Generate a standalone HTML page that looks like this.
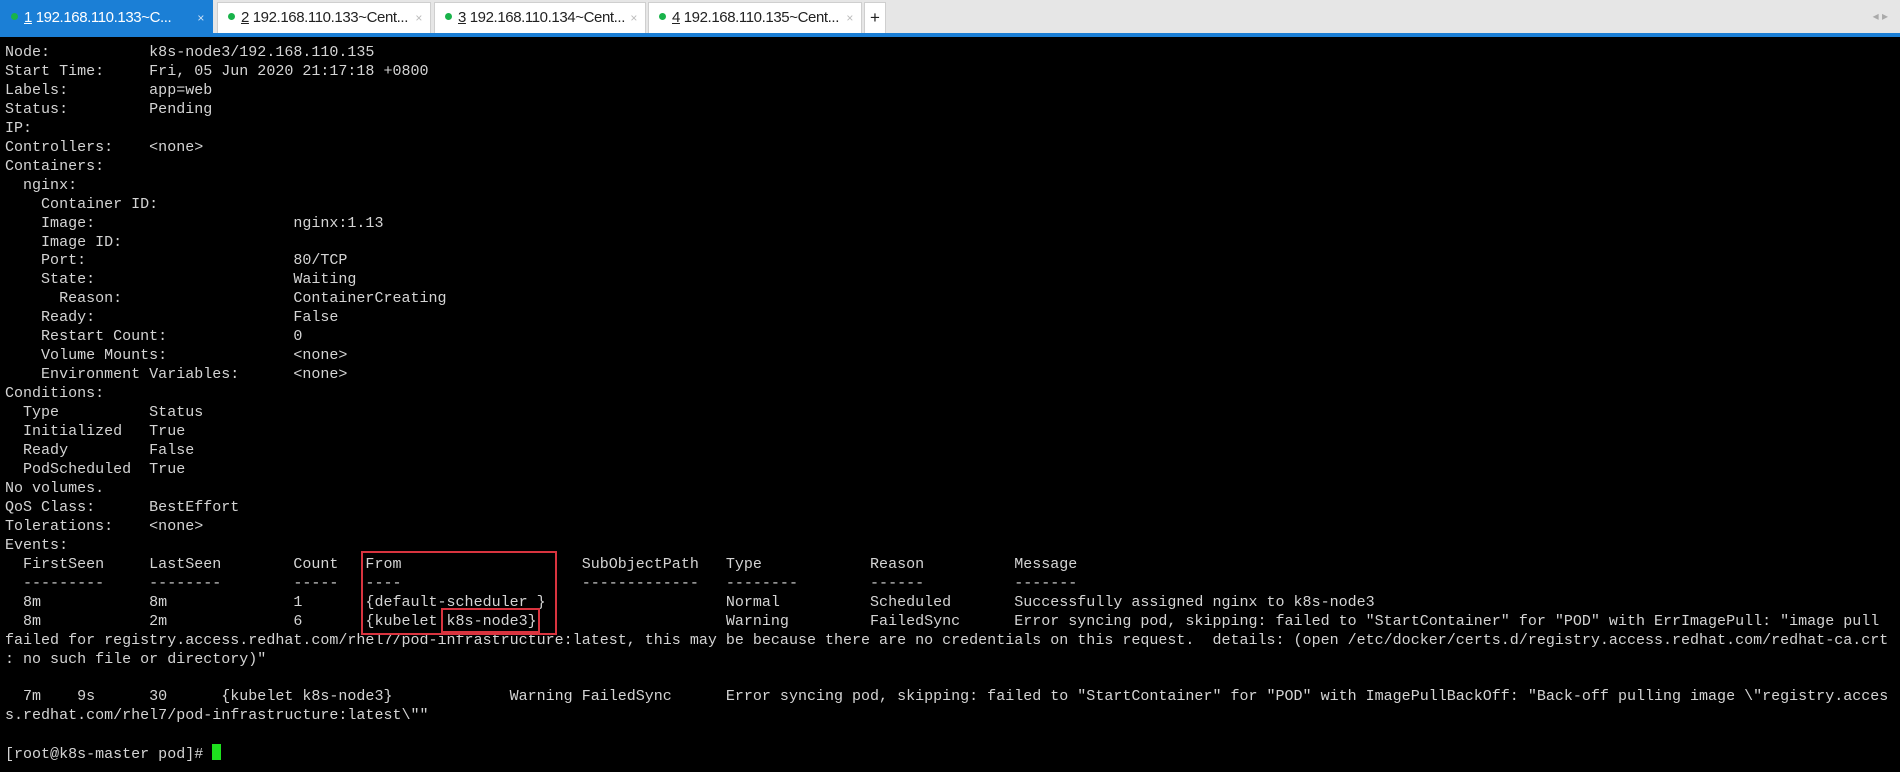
<!DOCTYPE html>
<html><head><meta charset="utf-8"><style>
html,body{margin:0;padding:0;width:1900px;height:772px;overflow:hidden;background:#000;}
#bar{position:absolute;left:0;top:0;width:1900px;height:33px;background:#e6e6e6;}
.tab{position:absolute;top:2px;height:31px;background:#fff;border:1px solid #cfcfcf;border-bottom:none;box-sizing:border-box;font-family:"Liberation Sans",sans-serif;font-size:15px;color:#222;line-height:30px;padding-left:10px;white-space:nowrap;overflow:hidden;letter-spacing:-0.4px}
.tab .d{display:inline-block;width:7px;height:7px;border-radius:50%;background:#19b34a;margin-right:6px;vertical-align:2px}
.tab .x{position:absolute;right:8px;top:0;color:#bbb;font-size:12px}
.tab.a{background:#1b7fd6;color:#fff;border-color:#1b7fd6;top:0;height:33px;line-height:34px}
.tab.a .x{color:#cfe3f7}
#line{position:absolute;left:0;top:33px;width:1900px;height:4px;background:#1b7fd6}
pre{position:absolute;left:5px;top:43px;margin:0;font-family:"Liberation Mono",monospace;font-size:15.03px;line-height:18.95px;color:#d4d4d4;white-space:pre}
.box{position:absolute;border:2px solid #d9343f;box-sizing:border-box}
.cur{display:inline-block;width:9px;height:16px;background:#1ee01e;vertical-align:-2px}
</style></head><body>
<div id="bar">
<div class="tab a" style="left:0;width:213px"><span class="d"></span><u>1</u> 192.168.110.133~C...<span class="x">×</span></div>
<div class="tab" style="left:217px;width:214px"><span class="d"></span><u>2</u> 192.168.110.133~Cent...<span class="x">×</span></div>
<div class="tab" style="left:434px;width:212px"><span class="d"></span><u>3</u> 192.168.110.134~Cent...<span class="x">×</span></div>
<div class="tab" style="left:648px;width:214px"><span class="d"></span><u>4</u> 192.168.110.135~Cent...<span class="x">×</span></div>
<div class="tab" style="left:864px;width:22px;padding-left:5px;font-size:17px">+</div>
<div style="position:absolute;right:12px;top:9px;color:#aaa;font:12px 'Liberation Sans',sans-serif">◂ ▸</div>
</div>
<div id="line"></div>
<pre>Node:           k8s-node3/192.168.110.135
Start Time:     Fri, 05 Jun 2020 21:17:18 +0800
Labels:         app=web
Status:         Pending
IP:
Controllers:    &lt;none&gt;
Containers:
  nginx:
    Container ID:
    Image:                      nginx:1.13
    Image ID:
    Port:                       80/TCP
    State:                      Waiting
      Reason:                   ContainerCreating
    Ready:                      False
    Restart Count:              0
    Volume Mounts:              &lt;none&gt;
    Environment Variables:      &lt;none&gt;
Conditions:
  Type          Status
  Initialized   True
  Ready         False
  PodScheduled  True
No volumes.
QoS Class:      BestEffort
Tolerations:    &lt;none&gt;
Events:
  FirstSeen     LastSeen        Count   From                    SubObjectPath   Type            Reason          Message
  ---------     --------        -----   ----                    -------------   --------        ------          -------
  8m            8m              1       {default-scheduler }                    Normal          Scheduled       Successfully assigned nginx to k8s-node3
  8m            2m              6       {kubelet k8s-node3}                     Warning         FailedSync      Error syncing pod, skipping: failed to "StartContainer" for "POD" with ErrImagePull: "image pull
failed for registry.access.redhat.com/rhel7/pod-infrastructure:latest, this may be because there are no credentials on this request.  details: (open /etc/docker/certs.d/registry.access.redhat.com/redhat-ca.crt
: no such file or directory)"

  7m    9s      30      {kubelet k8s-node3}             Warning FailedSync      Error syncing pod, skipping: failed to "StartContainer" for "POD" with ImagePullBackOff: "Back-off pulling image \"registry.acces
s.redhat.com/rhel7/pod-infrastructure:latest\""

[root@k8s-master pod]# <span class="cur"></span></pre>
<div class="box" style="left:361px;top:551px;width:196px;height:84px"></div>
<div class="box" style="left:441px;top:608px;width:99px;height:25px"></div>
</body></html>
